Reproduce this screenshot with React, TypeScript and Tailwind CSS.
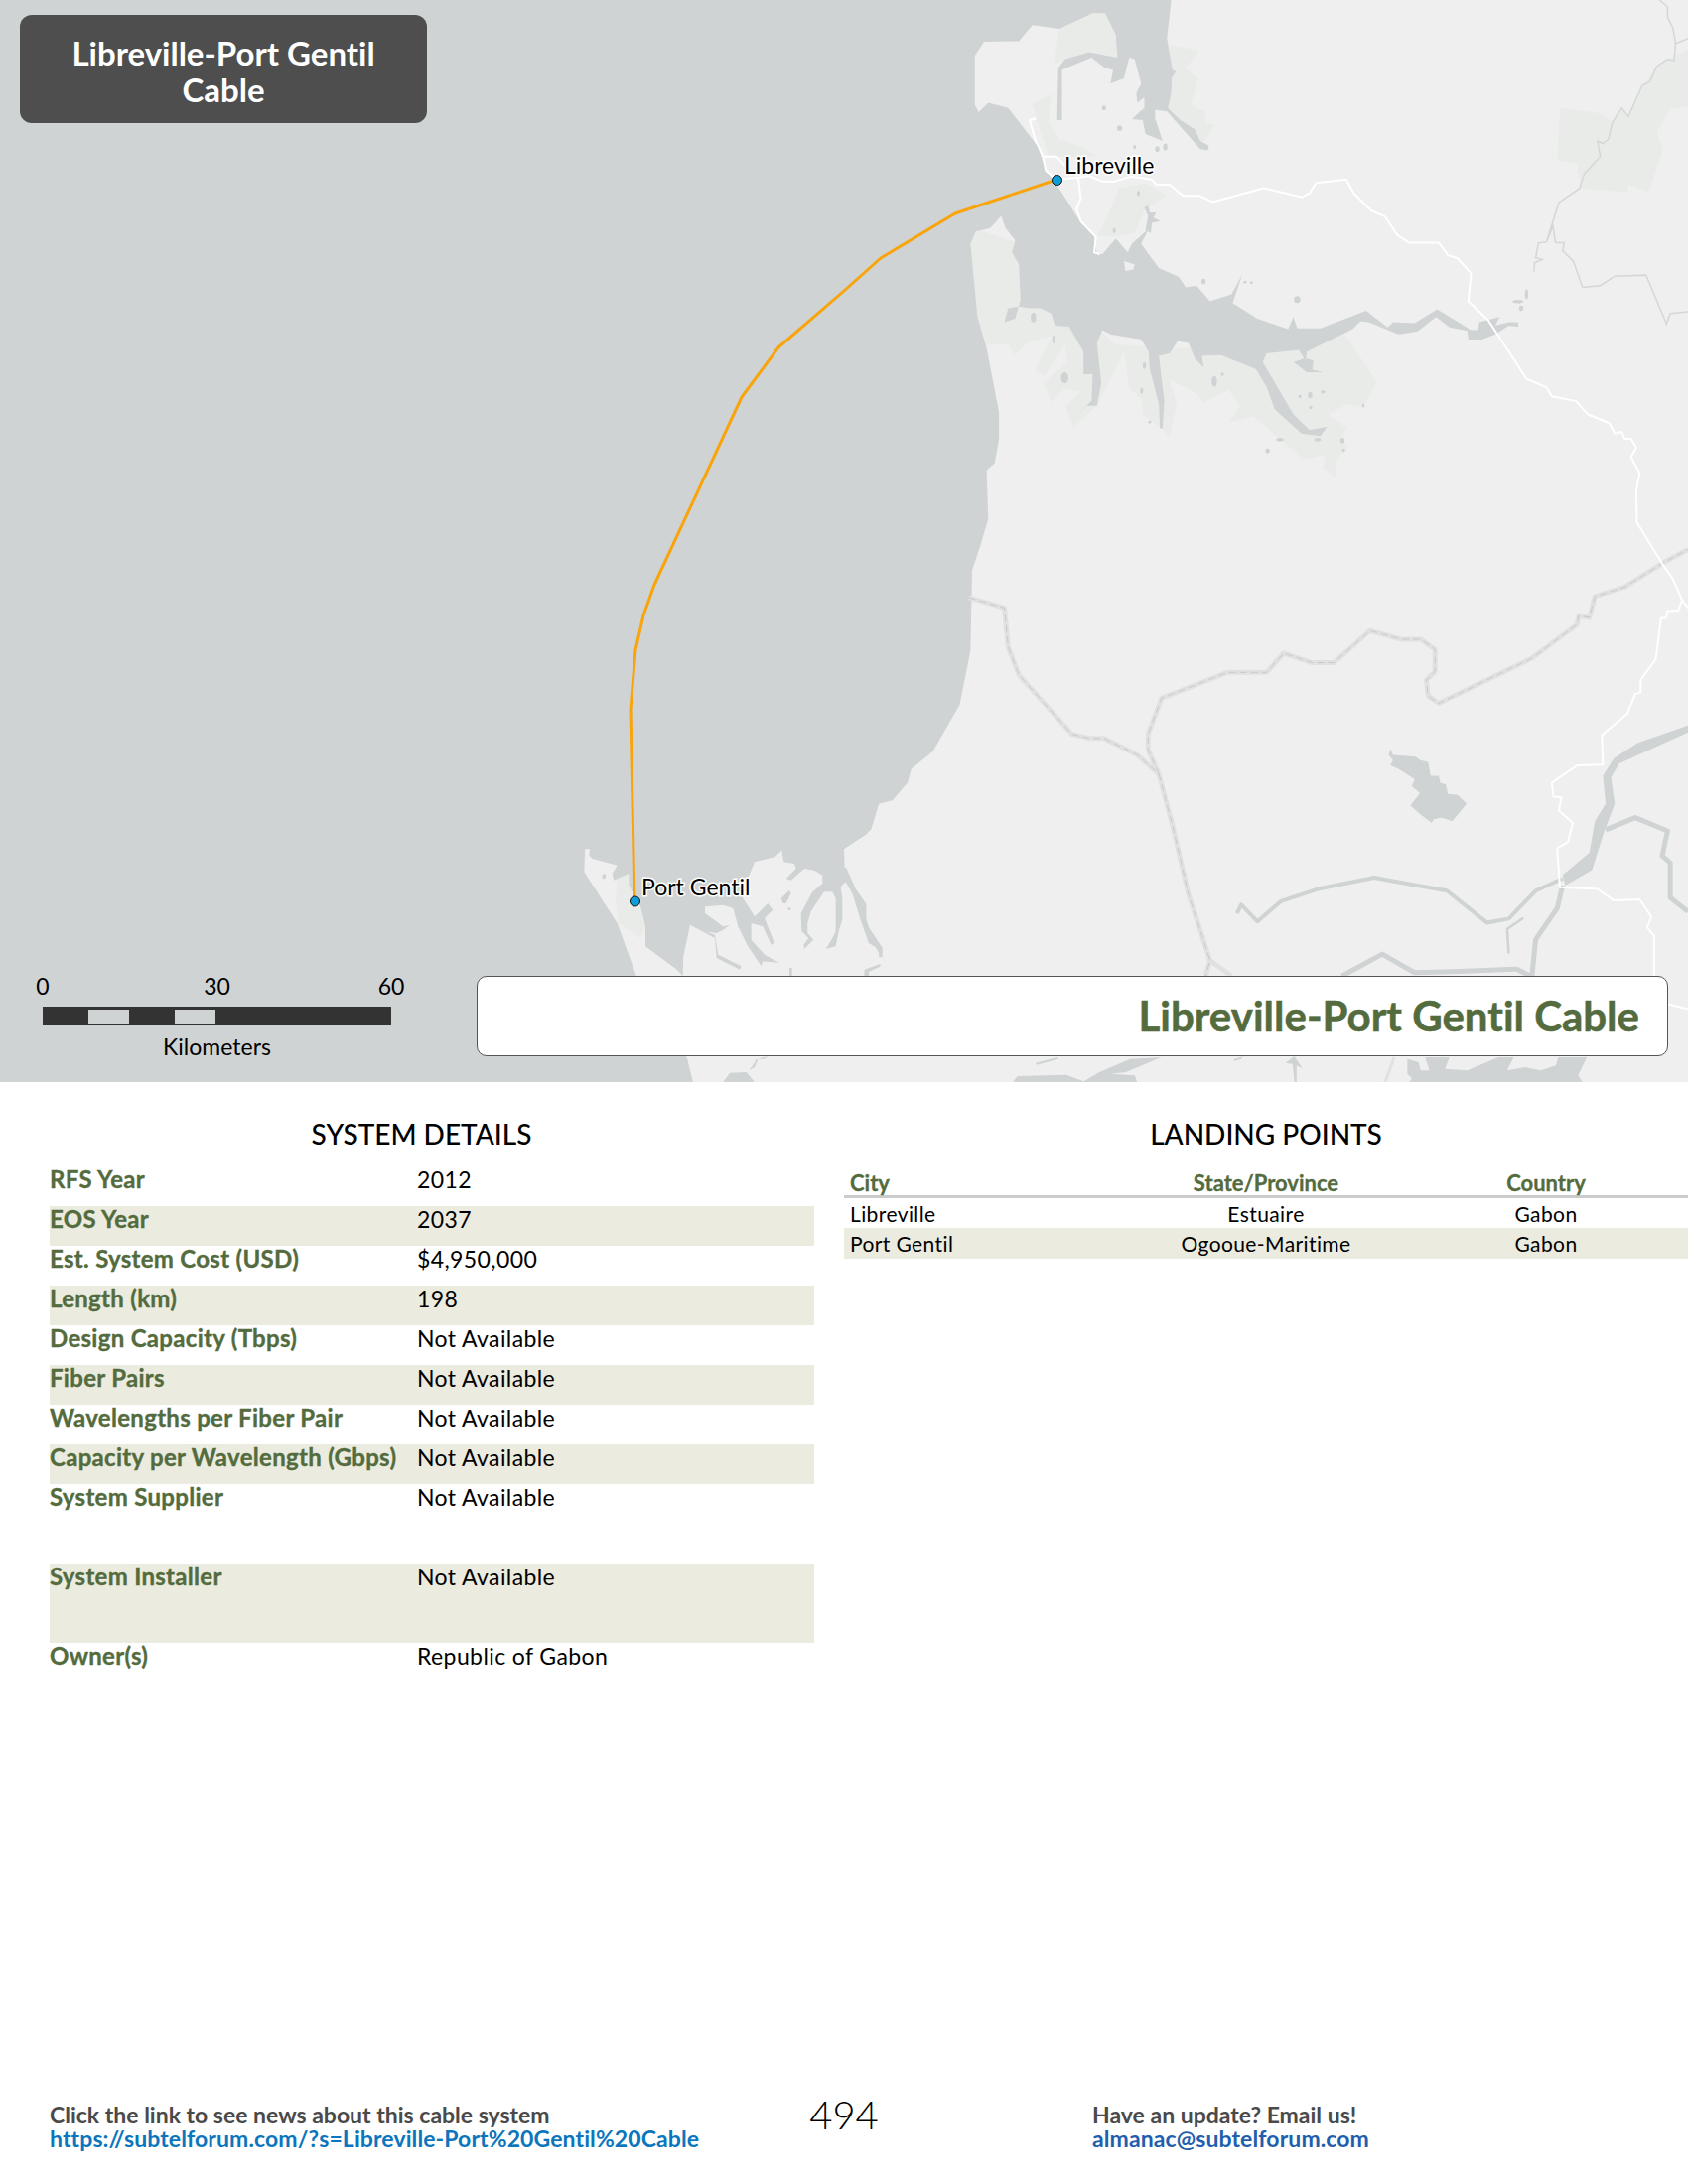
const WATER = "#cfd3d4";
const MANGROVE = "#e9ebe9";

const details: [string, string, string][] = [
  ["RFS Year", "2012", "h-10"],
  ["EOS Year", "2037", "h-10"],
  ["Est. System Cost (USD)", "$4,950,000", "h-10"],
  ["Length (km)", "198", "h-10"],
  ["Design Capacity (Tbps)", "Not Available", "h-10"],
  ["Fiber Pairs", "Not Available", "h-10"],
  ["Wavelengths per Fiber Pair", "Not Available", "h-10"],
  ["Capacity per Wavelength (Gbps)", "Not Available", "h-10"],
  ["System Supplier", "Not Available", "h-20"],
  ["System Installer", "Not Available", "h-20"],
  ["Owner(s)", "Republic of Gabon", "h-10"],
];

const landing = [
  ["Libreville", "Estuaire", "Gabon"],
  ["Port Gentil", "Ogooue-Maritime", "Gabon"],
];

const MainWater =
  "608,0 600,110 610,200 617,205 609,222 608,265 602,310 625,345 652,372 662,405 678,418 676,432 662,428 600,320 578,315 578,340 592,405 560,385 555,345 535,342 550,320 558,310 558,280 545,295 543,268 552,240 540,170 530,165 520,225 495,240 500,200 485,195 460,165 405,200 405,345 396,345 398,195 410,170 455,150 508,165 505,100 485,38 462,38 400,83 350,72 325,118 260,120 243,160 243,300 250,322 268,295 305,310 360,420 375,490 395,530 420,590 440,640 465,680 470,730 480,730 505,685 527,725 535,700 560,665 572,640 552,700 585,770 622,795 635,825 655,820 680,865 720,845 740,788 722,870 768,915 825,945 835,910 842,943 885,943 970,892 1010,940 1020,925 1060,928 1102,888 1165,948 1178,948 1180,925 1218,910 1210,935 1235,925 1252,925 1253,938 1235,935 1210,960 1185,975 1160,975 1158,950 1125,940 1100,910 1065,952 1030,960 975,925 960,922 945,945 860,1010 858,1030 872,1035 870,1062 890,1068 860,1070 835,1040 855,1030 845,1005 785,1015 778,1040 835,1190 865,1235 898,1225 885,1252 850,1245 800,1175 785,1110 765,1060 700,1020 665,1022 668,1055 652,1030 640,985 620,980 605,1015 585,1022 595,1150 592,1230 587,1230 585,1160 568,1060 566,1010 552,975 495,960 480,948 470,985 478,1100 470,1165 450,1165 432,1195 460,1150 462,1075 445,1075 445,1010 418,938 392,935 385,900 365,885 345,885 325,880 305,885 298,925 318,915 328,860 325,760 312,725 318,690 300,655 292,620 272,655 245,665 235,700 248,910 265,1000 288,1185 288,1260 280,1330 265,1350 268,1490 253,1568 238,1638 235,1868 215,2023 165,2158 125,2208 118,2248 90,2298 65,2308 50,2383 0,2438 -1568,2438 -1568,0";

// traced from the 3x crop at 580,830
const SouthWater =
  "-1800,60 895,0 880,30 810,75 812,130 835,175 862,235 890,330 925,375 925,405 905,372 885,360 860,290 835,210 815,175 800,190 805,225 805,290 795,320 785,370 755,378 775,345 785,325 785,225 775,205 750,205 710,265 700,300 700,330 718,350 690,378 688,365 703,345 682,325 680,270 715,205 745,180 745,155 720,140 690,135 650,170 635,165 665,135 660,120 628,115 622,80 600,100 540,115 505,200 505,225 540,280 580,240 595,260 570,285 600,360 590,365 565,310 530,300 530,350 570,395 615,420 565,415 560,430 520,370 490,310 475,255 445,245 390,250 390,270 445,310 465,305 445,320 425,330 395,325 420,335 430,395 500,430 495,440 425,405 420,345 345,305 325,400 323,460 305,440 210,370 210,310 195,250 160,185 160,150 115,170 110,150 125,125 50,105 40,95 45,45 28,60 25,145 125,300 183,460 336,708 354,780 -1800,780";

const islets: [number, number, number, number][] = [
  [483, 310, 4, 7], [512, 368, 5, 8], [540, 422, 3, 6], [582, 428, 4, 8], [597, 422, 4, 10], [547, 555, 3, 8], [502, 662, 3, 8],
  [668, 808, 4, 8], [745, 810, 3, 4], [757, 812, 3, 4], [842, 860, 6, 10], [352, 912, 5, 14], [390, 975, 3, 12], [410, 1085, 7, 16],
  [688, 1095, 5, 16], [703, 1075, 3, 5], [558, 1050, 3, 10], [553, 1122, 3, 8], [866, 1135, 4, 9], [847, 1138, 3, 5], [890, 1125, 4, 5],
  [867, 1170, 3, 5], [965, 1165, 2, 6], [810, 1262, 7, 5], [880, 1262, 6, 5], [926, 1265, 4, 8], [928, 1293, 3, 5], [787, 1295, 4, 7],
  [568, 1212, 3, 4], [1268, 845, 3, 14], [1252, 866, 10, 5], [1258, 885, 4, 8],
];

const roads = [
  "395,515 432,510 455,505 478,520 500,522 532,507 572,515 580,530 605,530 630,562 660,562 685,580 780,540 850,566 865,555 877,525 933,515 947,555 980,605 1005,622 1028,675 1050,697 1105,697 1122,733 1140,742 1165,785 1160,865 1197,920 1268,1088 1305,1112 1315,1138 1360,1152 1382,1190 1422,1215 1432,1245 1445,1240 1450,1260 1462,1260 1472,1285 1462,1312 1478,1358 1472,1410 1473,1500 1500,1568",
  "395,515 375,490 370,450 395,450 410,475",
  "370,450 355,400 345,345 356,340",
  "435,510 440,570 432,600 440,635 468,680 465,725 475,730",
];

const road3 =
  "1500,0 1522,55 1540,95 1557,155 1550,185 1530,187 1527,207 1518,207 1508,325 1480,385 1480,420 1470,425 1455,482 1408,543 1410,628 1362,630 1315,680 1318,720 1333,722 1328,760 1354,795 1345,850 1325,868 1330,980 1400,985 1430,1018 1478,1015 1500,1065 1492,1095 1505,1120 1505,1235";

const border1 = "232,148 298,178 305,290 325,370 423,540 455,552 483,552 545,600 585,655 610,800 640,1000 680,1190 672,1235";
const border2 =
  "585,655 565,585 565,540 590,437 712,363 785,363 817,308 870,335 910,335 977,243 1035,268 1072,268 1098,297 1098,360 1082,385 1085,430 1105,452 1278,322 1362,225 1365,200 1385,205 1395,145 1450,118 1520,50 1568,10";

const Map = () => (
  <svg className="absolute inset-0" width="1700" height="1090" viewBox="0 0 1700 1090">
    <rect width="1700" height="1090" fill="#efefef" />
    <g transform="translate(850 0) scale(.5421 .3508)">
      <g fill={MANGROVE}>
        <polygon points="605,130 660,145 635,195 658,225 645,300 670,320 672,350 688,360 675,395 660,420 650,370 625,345 602,310" />
        <polygon points="400,83 462,38 485,38 505,100 510,165 455,150 410,170 390,185" />
        <polygon points="350,300 385,270 380,350 400,400 440,420 470,450 380,450" />
        <polygon points="510,540 560,525 600,560 560,600 540,670 500,680 470,680 490,620" />
        <polygon points="250,660 235,700 248,910 262,990 305,990 318,1020 340,985 385,965 355,1065 372,1080 410,990 415,1040 370,1100 385,1155 410,1115 440,1125 412,1165 425,1230 470,1165 520,1010 440,900 330,700" />
        <polygon points="470,985 520,1010 530,1115 552,1145 555,1190 590,1230 605,1255 618,1160 605,1090 650,1125 670,1155 715,1120 735,1165 715,1215 760,1195 855,1320 895,1305 890,1345 915,1372 915,1320 935,1290 925,1250 935,1230 900,1190 935,1160 965,1170 990,1095 930,960 800,1000 600,1000" />
        <polygon points="1330,310 1405,325 1428,350 1445,310 1457,335 1485,245 1510,190 1530,170 1568,140 1568,305 1535,315 1510,380 1522,430 1495,552 1458,530 1455,552 1368,540 1362,470 1325,460" />
      </g>
      <polygon points={MainWater} fill={WATER} />
      <polygon points="520,750 540,760 537,775 523,778" fill="#efefef" />
      <polygon points="558,595 565,590 568,610 580,610 575,625 588,635 572,640 570,670 560,660 565,620" fill={WATER} />
      {islets.map(([cx, cy, rx, ry]) => (
        <ellipse key={`${cx}-${cy}`} cx={cx} cy={cy} rx={rx} ry={ry} fill={WATER} />
      ))}
      <g fill="none" stroke="#d5d7d6" strokeWidth="1.5">
        <polyline vectorEffect="non-scaling-stroke" points="1515,0 1530,20 1530,50 1540,80 1545,125 1568,110" />
        <polyline vectorEffect="non-scaling-stroke" points="1545,125 1542,175 1530,170 1510,190 1497,235 1483,245 1457,335 1445,310 1428,350 1420,400 1410,412 1400,405 1405,450 1375,500 1367,540 1328,582 1305,695 1317,650 1322,697 1338,697 1335,720 1355,750 1372,825 1405,820 1432,793 1490,790 1528,930 1535,900 1568,895" />
        <polyline vectorEffect="non-scaling-stroke" points="1305,695 1290,698 1285,740 1297,745 1283,755 1282,780" />
      </g>
      <g fill="none" stroke="#ffffff" strokeWidth="2" strokeLinejoin="round">
        {roads.map((r) => (
          <polyline key={r} vectorEffect="non-scaling-stroke" points={r} />
        ))}
      </g>
    </g>
    <g transform="translate(850 550) scale(.5421 .3508)">
      <polygon fill={WATER} points="1015,582 1020,600 1040,602 1062,605 1070,615 1085,620 1090,660 1105,660 1108,680 1118,685 1122,712 1140,715 1157,740 1130,790 1110,780 1095,785 1092,795 1070,770 1052,745 1070,710 1055,690 1060,670 1040,650 1030,640 1015,630 1020,615 1012,600" />
      <polygon fill={WATER} points="1568,515 1475,565 1430,610 1410,660 1415,740 1395,790 1385,880 1335,945 1340,975 1390,930 1410,830 1432,740 1425,665 1440,625 1568,535" />
      <g fill="none" stroke={WATER} strokeLinejoin="round">
        <polyline vectorEffect="non-scaling-stroke" strokeWidth="4" points="730,1055 738,1030 768,1078 812,1020 880,985 985,952 1040,968 1120,990 1195,1082 1235,1070 1285,990 1335,955" />
        <polyline vectorEffect="non-scaling-stroke" strokeWidth="5" points="1415,815 1470,780 1530,818 1520,890 1535,910 1535,1010 1568,1050" />
        <polyline vectorEffect="non-scaling-stroke" strokeWidth="5" points="1335,975 1325,1040 1285,1130 1278,1235" />
        <polyline vectorEffect="non-scaling-stroke" strokeWidth="2.5" points="1235,1170 1232,1100 1262,1068" />
        <polyline vectorEffect="non-scaling-stroke" strokeWidth="3.5" points="1,925 18,985 38,1030 38,1085 68,1155 68,1180" />
        <polyline vectorEffect="non-scaling-stroke" strokeWidth="2.5" points="40,1235 40,1220 65,1205" />
        <polyline vectorEffect="non-scaling-stroke" strokeWidth="5" points="925,1235 1000,1172 1060,1225 1130,1222 1250,1215 1275,1235" />
      </g>
      <g fill="none" strokeLinejoin="round">
        <g stroke="#e0e1e0" strokeWidth="5">
          <polyline vectorEffect="non-scaling-stroke" points={border1} />
          <polyline vectorEffect="non-scaling-stroke" points={border2} />
          <polyline vectorEffect="non-scaling-stroke" points="680,1190 720,1235" />
        </g>
        <g stroke="#c8c9c8" strokeWidth="1" strokeDasharray="7 4">
          <polyline vectorEffect="non-scaling-stroke" points={border1} />
          <polyline vectorEffect="non-scaling-stroke" points={border2} />
        </g>
        <g stroke="#ffffff" strokeWidth="2">
          <polyline vectorEffect="non-scaling-stroke" points={road3} />
          <polyline vectorEffect="non-scaling-stroke" points="1557,155 1568,178" />
          <polyline vectorEffect="non-scaling-stroke" points="1530,1315 1568,1330" />
        </g>
      </g>
    </g>
    <g transform="translate(580 830) scale(.3333)">
      <polygon fill={MANGROVE} points="125,165 160,150 190,250 210,310 195,345 130,300 120,230" />
      <polygon fill={WATER} points={SouthWater} />
      <polygon fill="#efefef" points="372,348 402,362 378,368" />
      <ellipse cx="85" cy="158" rx="6" ry="8" fill={WATER} />
      <polygon fill={WATER} points="620,225 645,200 650,210 635,240 625,240" />
      <ellipse cx="645" cy="257" rx="5" ry="4" fill={WATER} />
      <polygon fill={WATER} points="645,435 653,435 653,460 645,460" />
      <polygon fill={WATER} points="875,460 875,440 920,423 920,430 885,447 885,460" />
    </g>
    {/* strip under the title bar */}
    <g transform="translate(1000 1060) scale(.4464 .3333)" fill={WATER}>
      <polygon points="45,90 55,72 165,68 205,88 240,60 310,20 380,15 300,60 265,65 320,70 325,90" />
      <polygon points="96,32 145,15 148,20 98,38" />
      <polygon points="940,90 945,78 935,65 935,20 960,30 965,55 985,55 975,15 1030,15 1020,50 1070,55 1140,15 1175,15 1160,55 1200,45 1235,55 1270,40 1275,15 1340,15 1320,70 1330,90" />
      <polygon points="680,90 676,35 660,32 680,12 698,48 685,40 685,90" />
      <polygon points="542,22 565,12 560,20 545,26" />
      <polyline vectorEffect="non-scaling-stroke" points="905,15 885,90" fill="none" stroke="#e0e1e0" strokeWidth="3" />
    </g>
    <g transform="translate(680 1060) scale(.3333)" fill={WATER}>
      <polygon points="145,90 165,62 215,60 240,90" />
      <polygon points="222,55 238,35 245,20 250,22 240,45" />
      <polygon points="250,20 280,12 270,20" />
    </g>
    <polyline
      fill="none"
      stroke="#f9a40a"
      strokeWidth="3"
      strokeLinejoin="round"
      points="1064,181 962,215 887,260 850,293 784,350 747,400 659,589 648,620 640,655 635,715 639,908"
    />
    <circle cx="1064.5" cy="181.5" r="5" fill="#0f9dd8" stroke="#111" strokeWidth="1" />
    <circle cx="639.5" cy="908" r="5" fill="#0f9dd8" stroke="#111" strokeWidth="1" />
  </svg>
);

const ScaleBar = () => (
  <div className="absolute left-[43px] top-[978px] w-[351px] text-[23px] leading-[30px] text-black">
    <div className="relative h-[30px]">
      <span className="absolute left-0 -translate-x-1/2">0</span>
      <span className="absolute left-1/2 -translate-x-1/2">30</span>
      <span className="absolute right-0 translate-x-1/2">60</span>
    </div>
    <div className="mt-[6px] flex h-[19px] items-center bg-[#333333]">
      <div className="ml-[46px] h-[14px] w-[41px] bg-[#cfd3d4]" />
      <div className="ml-[46px] h-[14px] w-[41px] bg-[#cfd3d4]" />
    </div>
    <div className="mt-[6px] text-center">Kilometers</div>
  </div>
);

export default function App() {
  return (
    <div className="flex h-[2200px] w-[1700px] flex-col bg-white font-['Lato','Liberation_Sans',sans-serif] [font-variant-ligatures:none]">
      <div className="relative h-[1090px] overflow-hidden">
        <Map />
        <div className="absolute left-[20px] top-[15px] flex h-[109px] w-[410px] items-center justify-center rounded-[12px] bg-[#4e4e4e] px-8 pt-[4px] text-center text-[33px] font-bold leading-[37px] text-white">
          Libreville-Port Gentil Cable
        </div>
        <div className="absolute left-[1072px] top-[151px] text-[23px] leading-[30px] text-black [-webkit-text-stroke:3px_white] [paint-order:stroke_fill]">
          Libreville
        </div>
        <div className="absolute left-[646px] top-[878px] text-[23px] leading-[30px] text-black [-webkit-text-stroke:3px_white] [paint-order:stroke_fill]">
          Port Gentil
        </div>
        <ScaleBar />
        <div className="absolute left-[480px] top-[983px] flex h-[81px] w-[1200px] items-center justify-end rounded-[10px] border border-[#555555] bg-white pr-[28px] text-[42px] font-bold text-[#536b3d] [-webkit-text-stroke:0.5px_#536b3d]">
          Libreville-Port Gentil Cable
        </div>
      </div>

      <div className="flex h-[1000px] items-start">
        <section className="ml-[50px] w-[770px]">
          <h2 className="h-[85px] pr-[21px] pt-[35px] text-center text-[28px] font-medium leading-[34px] text-black">SYSTEM DETAILS</h2>
          {details.map(([label, value, height], i) => (
            <div key={label} className={`flex leading-[26px] ${height} ${i % 2 === 1 ? "bg-[#ebebdf]" : ""}`}>
              <div className="w-[370px] text-[24px] font-bold tracking-[0.3px] text-[#536b3d] [-webkit-text-stroke:0.35px_#536b3d]">{label}</div>
              <div className="text-[23px] tracking-[0.4px] text-black">{value}</div>
            </div>
          ))}
        </section>
        <section className="ml-[30px] w-[850px]">
          <h2 className="h-[85px] pt-[35px] text-center text-[28px] font-medium leading-[34px] text-black">LANDING POINTS</h2>
          <div className="grid h-[32px] grid-cols-[300px_250px_300px] items-center border-b-[3px] border-[#cccccc] text-[22px] font-bold text-[#536b3d] [-webkit-text-stroke:0.3px_#536b3d]">
            <div className="pl-[6px]">City</div>
            <div className="text-center">State/Province</div>
            <div className="pl-[14px] text-center">Country</div>
          </div>
          {landing.map(([city, state, country], i) => (
            <div
              key={city}
              className={`grid grid-cols-[300px_250px_300px] items-center text-[21px] tracking-[0.4px] text-black ${i === 1 ? "h-[31px] bg-[#ebebdf]" : "h-[30px]"}`}
            >
              <div className="pl-[6px]">{city}</div>
              <div className="text-center">{state}</div>
              <div className="pl-[14px] text-center">{country}</div>
            </div>
          ))}
        </section>
      </div>

      <footer className="flex h-[110px] items-start pt-[28px] text-[23px] font-bold leading-[24px]">
        <div className="ml-[50px] w-[750px]">
          <div className="text-[#4a4a4a]">Click the link to see news about this cable system</div>
          <div className="tracking-[0.1px] text-[#0b76bd]">https://subtelforum.com/?s=Libreville-Port%20Gentil%20Cable</div>
        </div>
        <div className="-mt-[6px] w-[100px] text-center text-[40px] font-light leading-[36px] text-black">494</div>
        <div className="ml-[200px]">
          <div className="text-[#4a4a4a]">Have an update? Email us!</div>
          <div className="tracking-[0.1px] text-[#1f5fae]">almanac@subtelforum.com</div>
        </div>
      </footer>
    </div>
  );
}
